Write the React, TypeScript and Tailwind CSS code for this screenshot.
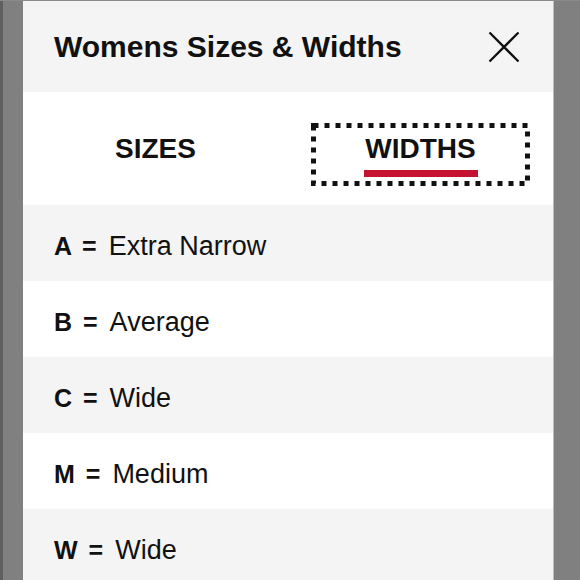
import React from "react";

const rows = [
  { k: "A", v: "Extra Narrow", bg: "bg-[#f4f4f4]" },
  { k: "B", v: "Average", bg: "bg-white" },
  { k: "C", v: "Wide", bg: "bg-[#f4f4f4]" },
  { k: "M", v: "Medium", bg: "bg-white" },
  { k: "W", v: "Wide", bg: "bg-[#f4f4f4]" },
];

export default function App() {
  return (
    <div
      className="flex w-[580px] h-[580px] overflow-hidden bg-[#808080] border-t border-[#8a8a8a] text-[#111]"
      style={{ fontFamily: '"Liberation Sans", Arial, sans-serif' }}
    >
      <div className="w-[23px] shrink-0 border-l-[3px] border-[#5f5f5f] bg-[#808080]" />
      <div className="w-[530px] shrink-0 flex flex-col bg-white">
        <div className="h-[91px] shrink-0 bg-[#f4f4f4] flex items-center justify-between pl-[31px] pr-[33px]">
          <h1 className="text-[30px] font-bold leading-none">Womens Sizes &amp; Widths</h1>
          <svg width="32" height="32" viewBox="0 0 32 32" className="block">
            <path d="M1.5 1.5 L30.5 30.5 M30.5 1.5 L1.5 30.5" stroke="#111" strokeWidth="2.3" fill="none" />
          </svg>
        </div>
        <div className="h-[113px] shrink-0 grid grid-cols-2 bg-white">
          <div className="flex justify-center pt-[41px]">
            <span className="text-[28px] font-bold leading-[32px]">SIZES</span>
          </div>
          <div className="relative flex flex-col items-center pt-[41px]">
            <span className="text-[28px] font-bold leading-[32px]">WIDTHS</span>
            <div className="mt-[5px] w-[114px] h-[7px] bg-[#c41230]" />
            <svg
              className="absolute left-[23px] top-[31px]"
              width="219"
              height="63"
              viewBox="0 0 219 63"
            >
              <rect
                x="2.5"
                y="2.5"
                width="214"
                height="58"
                fill="none"
                stroke="#111"
                strokeWidth="5"
                strokeDasharray="5 6"
              />
            </svg>
          </div>
        </div>
        {rows.map((r, i) => (
          <div
            key={i}
            className={`h-[76px] shrink-0 flex items-center pl-[31px] pt-[10px] ${r.bg}`}
          >
            <p className="leading-[32px]">
              <span className="font-bold text-[25px] [word-spacing:4px]">{r.k} =</span>
              <span className="text-[27px] ml-[12px]">{r.v}</span>
            </p>
          </div>
        ))}
      </div>
      <div className="w-[27px] shrink-0 border-l border-[#bdbdbd] bg-[#808080]" />
    </div>
  );
}
